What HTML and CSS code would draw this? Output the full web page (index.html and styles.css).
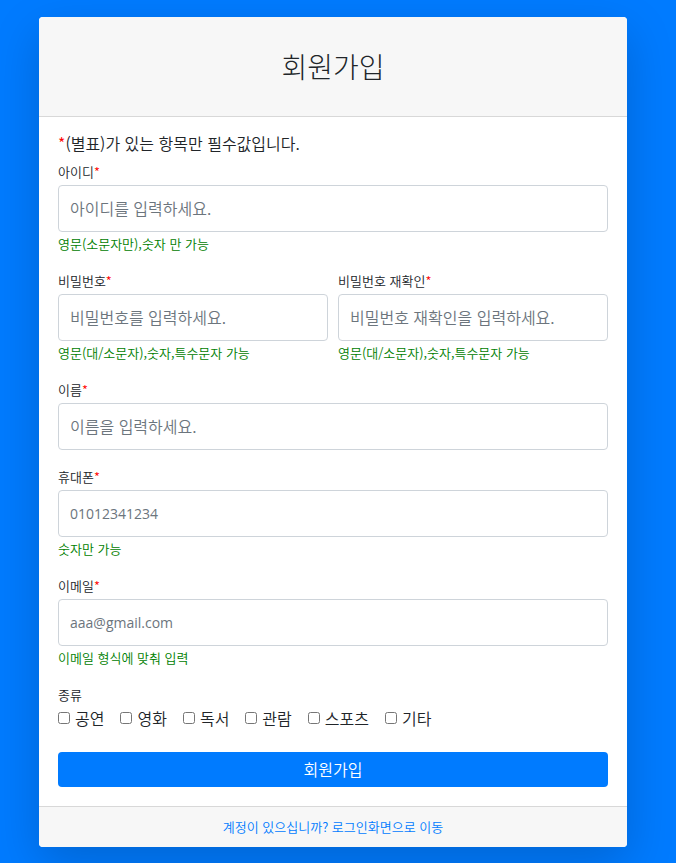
FILE: index.html
```html
<!DOCTYPE html>
<html lang="ko">
<head>
<meta charset="utf-8">
<meta name="viewport" content="width=device-width, initial-scale=1">
<title>회원가입</title>
<link rel="stylesheet" href="styles.css">
</head>
<body>
<main class="card">
  <header class="card-header">
    <h1 class="title">회원가입</h1>
  </header>
  <form class="card-body">
    <p class="intro"><span class="required">*</span>(별표)가 있는 항목만 필수값입니다.</p>
    <div class="field">
      <label class="label" for="userId">아이디<span class="required">*</span></label>
      <input class="control" id="userId" type="text" placeholder="아이디를 입력하세요.">
      <p class="hint">영문(소문자만),숫자 만 가능</p>
    </div>
    <div class="row">
      <div class="field">
        <label class="label" for="password">비밀번호<span class="required">*</span></label>
        <input class="control" id="password" type="password" placeholder="비밀번호를 입력하세요.">
        <p class="hint">영문(대/소문자),숫자,특수문자 가능</p>
      </div>
      <div class="field">
        <label class="label" for="passwordCheck">비밀번호 재확인<span class="required">*</span></label>
        <input class="control" id="passwordCheck" type="password" placeholder="비밀번호 재확인을 입력하세요.">
        <p class="hint">영문(대/소문자),숫자,특수문자 가능</p>
      </div>
    </div>
    <div class="field">
      <label class="label" for="userName">이름<span class="required">*</span></label>
      <input class="control" id="userName" type="text" placeholder="이름을 입력하세요.">
    </div>
    <div class="field">
      <label class="label" for="phone">휴대폰<span class="required">*</span></label>
      <input class="control control-latin" id="phone" type="tel" placeholder="01012341234">
      <p class="hint">숫자만 가능</p>
    </div>
    <div class="field">
      <label class="label" for="email">이메일<span class="required">*</span></label>
      <input class="control control-latin" id="email" type="email" placeholder="aaa@gmail.com">
      <p class="hint">이메일 형식에 맞춰 입력</p>
    </div>
    <fieldset class="choices">
      <legend class="label">종류</legend>
      <div class="choice-list">
        <label class="choice"><input type="checkbox" name="kind">공연</label>
        <label class="choice"><input type="checkbox" name="kind">영화</label>
        <label class="choice"><input type="checkbox" name="kind">독서</label>
        <label class="choice"><input type="checkbox" name="kind">관람</label>
        <label class="choice"><input type="checkbox" name="kind">스포츠</label>
        <label class="choice"><input type="checkbox" name="kind">기타</label>
      </div>
    </fieldset>
    <button class="submit" type="submit">회원가입</button>
  </form>
  <footer class="card-footer">
    <a class="link" href="#">계정이 있으십니까? 로그인화면으로 이동</a>
  </footer>
</main>
</body>
</html>
```
FILE: styles.css
```css
* {
  box-sizing: border-box;
}

body {
  margin: 0;
  padding: 17px 49px 16px 39px;
  background: #007bff;
  color: #212529;
  font-family: "Noto Sans CJK KR", sans-serif;
  font-size: 16px;
  font-weight: 350;
  line-height: 24px;
}

.card {
  border-radius: 4px;
  background: #fff;
  box-shadow: 0 16px 48px rgba(0, 0, 0, 0.175);
}

.card-header {
  padding: 32px 20px;
  border-bottom: 1px solid #d8d8d8;
  border-radius: 4px 4px 0 0;
  background: #f7f7f7;
  text-align: center;
}

.title {
  margin: 0;
  font-size: 28px;
  font-weight: 300;
  line-height: 35px;
}

.card-body {
  padding: 14px 19px 19px;
}

.intro {
  margin: 0 0 8px;
}

.required {
  color: #f00;
}

.row {
  display: grid;
  grid-template-columns: 1fr 1fr;
  gap: 10px;
}

.field {
  margin-bottom: 18px;
}

.label {
  display: block;
  margin-bottom: 4px;
  padding: 0;
  font-size: 13px;
  line-height: 18px;
}

.control {
  display: block;
  width: 100%;
  height: 47px;
  padding: 5px 11px 7px;
  border: 1px solid #ced4da;
  border-radius: 4px;
  background: #fff;
  color: #495057;
  font-family: inherit;
  font-size: 16px;
  font-weight: inherit;
}

.control-latin {
  padding: 6px 11px;
  font-family: "Open Sans", sans-serif;
  font-size: 14px;
  font-weight: 400;
}

.control::placeholder {
  color: #6c757d;
  opacity: 1;
}

.hint {
  margin: 3px 0 0;
  padding-bottom: 1px;
  color: #008000;
  font-size: 13px;
  line-height: 18px;
}

.choices {
  min-width: 0;
  margin: 0 0 24px;
  padding: 0;
  border: 0;
}

.choice-list {
  display: flex;
  flex-wrap: wrap;
  gap: 16px;
}

.choice {
  display: flex;
  align-items: center;
  gap: 5px;
  line-height: 20px;
}

.choice input {
  width: 12px;
  height: 12px;
  margin: 0;
}

.submit {
  display: block;
  width: 100%;
  height: 35px;
  padding: 0 0 2px;
  border: 0;
  border-radius: 4px;
  background: #007bff;
  color: #fff;
  font-family: inherit;
  font-size: 16px;
  font-weight: inherit;
  line-height: 24px;
}

.card-footer {
  padding: 11px 20px;
  border-top: 1px solid #d8d8d8;
  border-radius: 0 0 4px 4px;
  background: #f7f7f7;
  font-size: 13px;
  line-height: 18px;
  text-align: center;
}

.link {
  color: #007bff;
  text-decoration: none;
}
```
